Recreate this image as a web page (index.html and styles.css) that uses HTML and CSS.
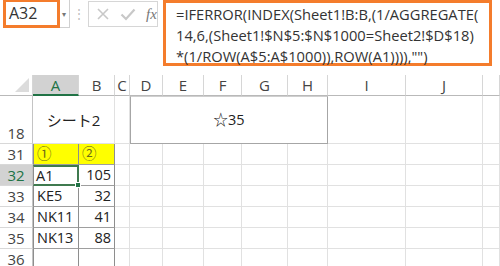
FILE: index.html
```html
<!DOCTYPE html>
<html lang="ja">
<head>
    <meta charset="UTF-8">
    <title>Sheet2</title>
    <link rel="stylesheet" href="styles.css">
</head>
<body>
    <div class="formula-bar">
        <div class="name-wrap">
            <div class="name-box">A32</div>
            <span class="drop">&#9662;</span>
        </div>
        <div class="dots">&#8942;</div>
        <div class="fx-box">
            <svg width="14" height="14" viewBox="0 0 14 14"><path d="M2 2 L12 12 M12 2 L2 12" stroke="#c8c8c8" stroke-width="1.6" fill="none"/></svg>
            <svg width="16" height="14" viewBox="0 0 16 14"><path d="M1.5 7.5 L6 12 L14.5 2.5" stroke="#c8c8c8" stroke-width="2.2" fill="none"/></svg>
            <span class="fx">fx</span>
        </div>
        <div class="formula">=IFERROR(INDEX(Sheet1!B:B,(1/AGGREGATE(<br>14,6,(Sheet1!$N$5:$N$1000=Sheet2!$D$18)<br>*(1/ROW(A$5:A$1000)),ROW(A1)))),"")</div>
    </div>

    <div class="sheet">
        <!-- column headers -->
        <div class="ch corner"><span class="tri"></span></div>
        <div class="ch on">A</div>
        <div class="ch">B</div>
        <div class="ch">C</div>
        <div class="ch">D</div>
        <div class="ch">E</div>
        <div class="ch">F</div>
        <div class="ch">G</div>
        <div class="ch">H</div>
        <div class="ch">I</div>
        <div class="ch">J</div>
        <div class="ch"></div>

        <!-- row 18 -->
        <div class="rh bottom">18</div>
        <div class="c label">シート2</div>
        <div class="c"></div>
        <div class="c star"><span>☆35</span></div>
        <div class="c"></div>
        <div class="c"></div>
        <div class="c"></div>

        <!-- row 31 -->
        <div class="rh">31</div>
        <div class="c t a yellow">①</div>
        <div class="c t yellow">②</div>
        <div class="c"></div><div class="c"></div><div class="c"></div><div class="c"></div><div class="c"></div><div class="c"></div><div class="c"></div><div class="c"></div><div class="c"></div>

        <!-- row 32 -->
        <div class="rh on">32</div>
        <div class="c t a sel">A1</div>
        <div class="c t num">105</div>
        <div class="c"></div><div class="c"></div><div class="c"></div><div class="c"></div><div class="c"></div><div class="c"></div><div class="c"></div><div class="c"></div><div class="c"></div>

        <!-- row 33 -->
        <div class="rh">33</div>
        <div class="c t a">KE5</div>
        <div class="c t num">32</div>
        <div class="c"></div><div class="c"></div><div class="c"></div><div class="c"></div><div class="c"></div><div class="c"></div><div class="c"></div><div class="c"></div><div class="c"></div>

        <!-- row 34 -->
        <div class="rh">34</div>
        <div class="c t a">NK11</div>
        <div class="c t num">41</div>
        <div class="c"></div><div class="c"></div><div class="c"></div><div class="c"></div><div class="c"></div><div class="c"></div><div class="c"></div><div class="c"></div><div class="c"></div>

        <!-- row 35 -->
        <div class="rh">35</div>
        <div class="c t a">NK13</div>
        <div class="c t num">88</div>
        <div class="c"></div><div class="c"></div><div class="c"></div><div class="c"></div><div class="c"></div><div class="c"></div><div class="c"></div><div class="c"></div><div class="c"></div>

        <!-- row 36 -->
        <div class="rh">36</div>
        <div class="c t a"></div>
        <div class="c t"></div>
        <div class="c"></div><div class="c"></div><div class="c"></div><div class="c"></div><div class="c"></div><div class="c"></div><div class="c"></div><div class="c"></div><div class="c"></div>
    </div>
</body>
</html>
```

FILE: styles.css
```css
body{
    margin: 0;
    background: #fff;
    color: #222;
    font-family: "Open Sans", "Noto Sans CJK JP", sans-serif;
    overflow: hidden;
}

/* formula bar */
.formula-bar{
    display: flex;
    align-items: flex-start;
    height: 75px;
}
.name-wrap{
    display: flex;
    align-items: center;
    margin: 0 0 0 3px;
    height: 27px;
    width: 66px;
    border-right: 1px solid #d0d0d0;
    border-bottom: 1px solid #d0d0d0;
}
.name-box{
    box-sizing: border-box;
    width: 57px;
    height: 29px;
    border: 3px solid #f47c2c;
    padding-left: 3px;
    font-size: 16px;
    line-height: 22px;
    color: #333;
}
.drop{
    font-size: 8px;
    color: #777;
    margin-left: 2px;
}
.dots{
    width: 18px;
    text-align: center;
    color: #bbb;
    font-size: 12px;
    line-height: 28px;
}
.fx-box{
    box-sizing: border-box;
    display: flex;
    align-items: center;
    gap: 10px;
    width: 70px;
    height: 26px;
    margin-top: 1px;
    padding-left: 7px;
    border: 1px solid #d6d6d6;
}
.fx{
    font-family: "Liberation Serif", serif;
    font-style: italic;
    font-size: 15px;
    color: #777;
}
.formula{
    box-sizing: border-box;
    flex: 1;
    height: 66px;
    margin: 0 8px 0 5px;
    border: 3px solid #f47c2c;
    padding: 1px 0 0 10px;
    font-size: 14.7px;
    line-height: 21px;
    color: #333;
    white-space: nowrap;
}

/* sheet */
.sheet{
    display: grid;
    grid-template-columns: 33px 46px 36px 15px 33px 41px 38px 46px 40px 78px 77px 1fr;
    grid-template-rows: 21px 48px repeat(6, 21px);
}
.ch, .rh, .c{
    box-sizing: border-box;
    border-right: 1px solid #e1e1e1;
    border-bottom: 1px solid #e1e1e1;
}
.ch{
    text-align: center;
    font-size: 15px;
    line-height: 20px;
    color: #444;
    border-right-color: #d6d6d6;
    border-bottom-color: #b9b9b9;
}
.ch.on{
    background: #d2d2d2;
    color: #217346;
    border-bottom: 2px solid #217346;
}
.corner{
    position: relative;
}
.tri{
    position: absolute;
    right: 3px;
    bottom: 3px;
    border-left: 14px solid transparent;
    border-bottom: 14px solid #dcdcdc;
}
.rh{
    text-align: center;
    font-size: 15px;
    line-height: 20px;
    color: #444;
    border-right-color: #c4c4c4;
    border-bottom-color: #d8d8d8;
}
.rh.bottom{
    display: flex;
    align-items: flex-end;
    justify-content: center;
}
.rh.on{
    background: #d2d2d2;
    color: #217346;
}
.c{
    font-size: 14.5px;
    line-height: 20px;
    padding: 0 3px;
    white-space: nowrap;
}
.label{
    grid-column: span 2;
    display: flex;
    align-items: center;
    justify-content: center;
    font-size: 15px;
}
.star{
    grid-column: span 5;
    display: flex;
    align-items: center;
    justify-content: center;
    border: 1px solid #a6a6a6;
    border-top-color: #cfcfcf;
}
.t{
    border-right-color: #8e8e8e;
    border-bottom-color: #9e9e9e;
}
.t.a{
    border-left: 1px solid #8e8e8e;
}
.yellow{
    background: #ffff00;
    color: #6b6b1a;
}
.num{
    text-align: right;
}
.sel{
    position: relative;
    border: 2px solid #3f7a4f;
    padding-left: 2px;
    line-height: 18px;
}
.sel::after{
    content: "";
    position: absolute;
    right: -4px;
    bottom: -4px;
    width: 4px;
    height: 4px;
    background: #217346;
    border: 1px solid #fff;
}
```
